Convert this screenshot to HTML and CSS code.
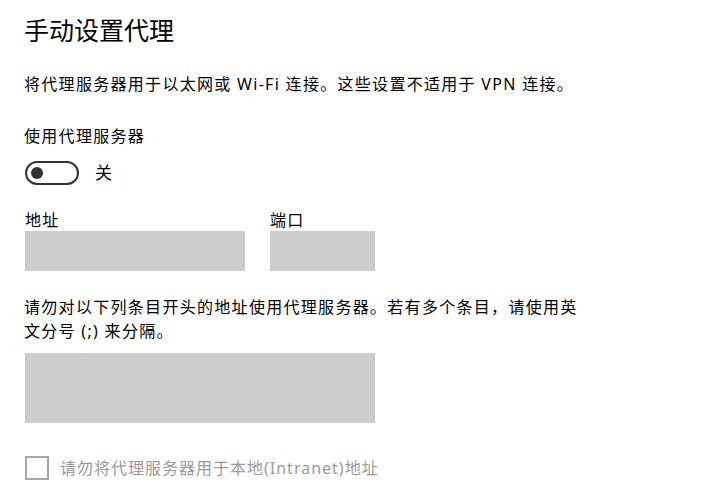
FILE: index.html
```html
<!DOCTYPE html>
<html lang="zh-CN">
<head>
<meta charset="utf-8">
<link rel="stylesheet" href="styles.css">
</head>
<body>
<main class="page">
  <h1 class="title">手动设置代理</h1>
  <p class="desc">将代理服务器用于以太网或 Wi-Fi 连接。这些设置不适用于 VPN 连接。</p>
  <div class="label">使用代理服务器</div>
  <div class="toggle-row">
    <span class="toggle"><span class="knob"></span></span>
    <span class="toggle-text">关</span>
  </div>
  <div class="fields">
    <div class="field">
      <div class="field-label">地址</div>
      <div class="box box-addr"></div>
    </div>
    <div class="field">
      <div class="field-label">端口</div>
      <div class="box box-port"></div>
    </div>
  </div>
  <p class="desc2">请勿对以下列条目开头的地址使用代理服务器。若有多个条目，请使用英文分号 (;) 来分隔。</p>
  <div class="box box-exc"></div>
  <div class="check-row">
    <span class="checkbox"></span>
    <span class="check-text">请勿将代理服务器用于本地(Intranet)地址</span>
  </div>
</main>
</body>
</html>
```
FILE: styles.css
```css
html, body {
  margin: 0;
  padding: 0;
  background: #ffffff;
}
body {
  font-family: "Noto Sans", "Noto Sans CJK SC", sans-serif;
  color: #000000;
  width: 702px;
  height: 493px;
  overflow: hidden;
}
.page {
  padding-left: 24px;
}
.title {
  margin: 15px 0 0;
  font-size: 25px;
  line-height: 30px;
  font-weight: 400;
}
.desc {
  margin: 27px 0 0;
  font-size: 16px;
  line-height: 24px;
  letter-spacing: 1.3px;
}
.label {
  margin-top: 28px;
  font-size: 16px;
  line-height: 24px;
  letter-spacing: 1.3px;
}
.toggle-row {
  margin-top: 13px;
  display: flex;
  align-items: center;
  height: 24px;
  padding-left: 1px;
}
.toggle {
  box-sizing: border-box;
  width: 54px;
  height: 24px;
  border: 2px solid #333333;
  border-radius: 12px;
  display: flex;
  align-items: center;
  padding-left: 4px;
}
.knob {
  width: 12px;
  height: 12px;
  border-radius: 50%;
  background: #333333;
}
.toggle-text {
  margin-left: 16px;
  font-size: 17px;
  line-height: 24px;
}
.fields {
  margin-top: 24px;
  display: flex;
  gap: 25px;
  padding-left: 1px;
}
.field-label {
  font-size: 16px;
  line-height: 22px;
  letter-spacing: 1.3px;
}
.box {
  background: #cccccc;
}
.field .box {
  height: 40px;
}
.box-addr {
  width: 220px;
}
.box-port {
  width: 105px;
}
.desc2 {
  margin: 24px 0 0;
  width: 564px;
  font-size: 16px;
  line-height: 24px;
  letter-spacing: 1.3px;
}
.box-exc {
  margin-top: 10px;
  margin-left: 1px;
  width: 350px;
  height: 70px;
}
.check-row {
  margin-top: 33px;
  display: flex;
  align-items: center;
  height: 24px;
  padding-left: 1px;
}
.checkbox {
  box-sizing: border-box;
  width: 24px;
  height: 24px;
  border: 2px solid #a6a6a6;
}
.check-text {
  margin-left: 11px;
  font-size: 16px;
  line-height: 24px;
  letter-spacing: 1px;
  color: #999999;
}
```
